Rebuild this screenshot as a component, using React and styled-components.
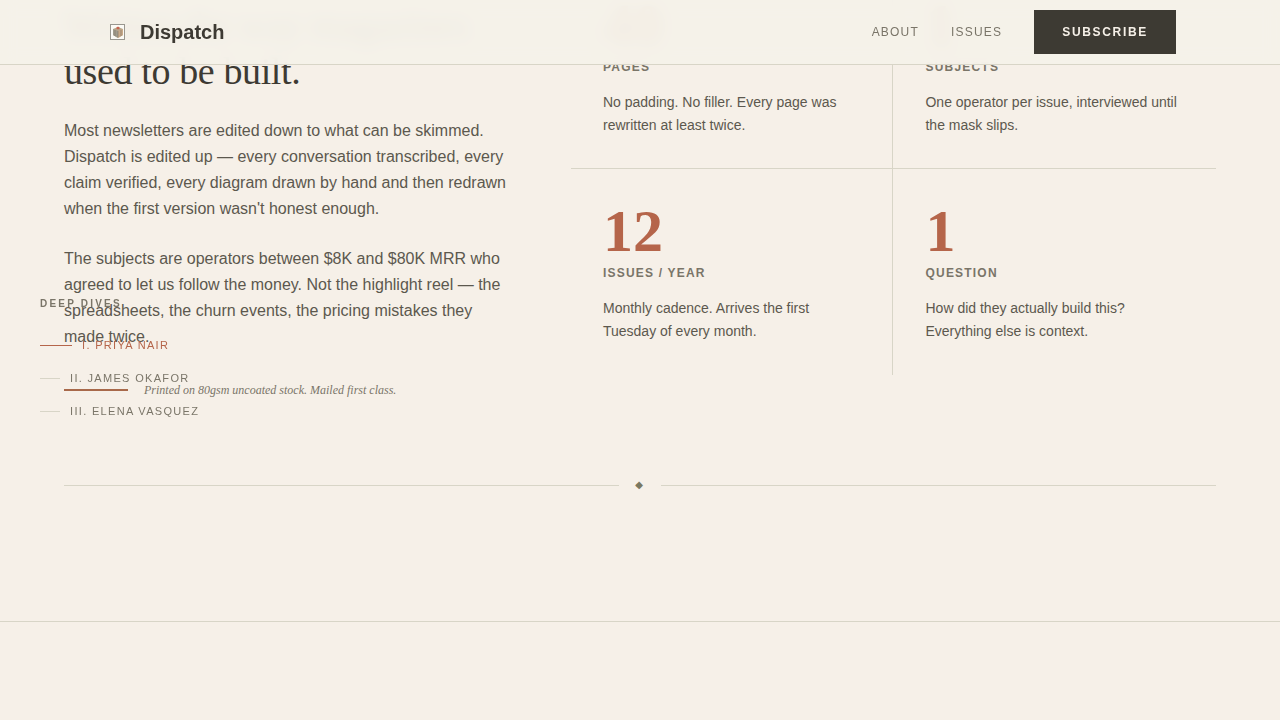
import React from "react";
import styled, { createGlobalStyle } from "styled-components";

const sans = `"Liberation Sans", Arial, sans-serif`;
const serif = `"Liberation Serif", "Times New Roman", serif`;

const paper = "#f6f0e8";
const ink = "#3d3a33";
const body = "#5c584e";
const muted = "#7a7568";
const rule = "#d8d5c7";
const rust = "#b5654a";

const GlobalStyle = createGlobalStyle`
  * {
    box-sizing: border-box;
  }

  body {
    margin: 0;
    background: ${paper};
    color: ${body};
    font-family: ${sans};
  }

  h2,
  h3,
  p,
  ul {
    margin: 0;
    padding: 0;
  }

  a {
    text-decoration: none;
  }
`;

const Header = styled.header`
  position: fixed;
  top: 0;
  left: 0;
  right: 0;
  z-index: 10;
  display: flex;
  align-items: center;
  justify-content: space-between;
  height: 65px;
  padding: 0 104px;
  background: rgba(245, 241, 233, 0.96);
  backdrop-filter: blur(8px);
  border-bottom: 1px solid ${rule};
`;

const Brand = styled.a`
  display: flex;
  align-items: center;
  gap: 8px;
  color: ${ink};
  font-size: 20px;
  font-weight: 700;
`;

const Mark = styled.svg`
  display: block;
  width: 28px;
  height: 28px;
`;

const Menu = styled.nav`
  display: flex;
  align-items: center;
  gap: 32px;
`;

const MenuLink = styled.a`
  color: ${muted};
  font-size: 12px;
  letter-spacing: 0.1em;
  text-transform: uppercase;
`;

const Subscribe = styled.button`
  height: 44px;
  padding: 0 28px;
  border: 0;
  background: ${ink};
  color: ${paper};
  font-family: ${sans};
  font-size: 12px;
  font-weight: 700;
  letter-spacing: 0.14em;
  text-transform: uppercase;
`;

const Rail = styled.nav`
  position: fixed;
  top: 50%;
  left: 40px;
  z-index: 5;
  padding-bottom: 3px;
  transform: translateY(-50%);
`;

const RailTitle = styled.h3`
  margin-bottom: 26px;
  color: ${muted};
  font-size: 10px;
  line-height: 14px;
  letter-spacing: 0.22em;
  text-transform: uppercase;
`;

const RailList = styled.ul`
  display: flex;
  flex-direction: column;
  gap: 16px;
  list-style: none;
`;

const RailLink = styled.a`
  display: flex;
  align-items: center;
  gap: 10px;
  color: ${props => (props.$active ? rust : muted)};
  font-size: 11px;
  line-height: 17px;
  letter-spacing: 0.12em;
  text-transform: uppercase;

  &::before {
    content: "";
    width: ${props => (props.$active ? 32 : 20)}px;
    height: 1px;
    background: ${props => (props.$active ? rust : rule)};
  }
`;

/* the page rests a little way down, its first rows under the header */
const Page = styled.main`
  margin-top: -37px;
`;

const Feature = styled.section`
  display: grid;
  grid-template-columns: 57fr 83fr;
  align-items: start;
  gap: 64px;
  padding: 0 64px;
`;

const Story = styled.div`
  padding-top: 39px;
`;

const Title = styled.h2`
  margin-bottom: 24px;
  color: ${ink};
  font-family: ${serif};
  font-size: 38px;
  font-weight: 400;
  line-height: 46px;
  letter-spacing: -0.01em;
`;

const Paragraph = styled.p`
  font-size: 16px;
  line-height: 26px;

  & + & {
    margin-top: 24px;
  }
`;

const Colophon = styled.p`
  display: flex;
  align-items: center;
  gap: 16px;
  margin-top: 32px;
  color: ${muted};
  font-family: ${serif};
  font-size: 12px;
  font-style: italic;
  line-height: 16px;

  &::before {
    content: "";
    width: 64px;
    height: 2px;
    background: #a8694a;
  }
`;

const Stats = styled.div`
  display: grid;
  grid-template-columns: 1fr 1fr;
`;

const Stat = styled.article`
  padding: 32px;

  &:nth-child(odd) {
    border-right: 1px solid ${rule};
  }
  &:nth-child(-n + 2) {
    padding-bottom: 31px;
    border-bottom: 1px solid ${rule};
  }
`;

const Figure = styled.p`
  color: ${rust};
  font-family: ${serif};
  font-size: 60px;
  font-weight: 700;
  line-height: 60px;
`;

const Label = styled.h3`
  margin: 4px 0 16px;
  color: ${muted};
  font-size: 12px;
  line-height: 16px;
  letter-spacing: 0.1em;
  text-transform: uppercase;
`;

const Note = styled.p`
  font-size: 14px;
  line-height: 23px;
`;

const Divider = styled.div`
  display: flex;
  align-items: center;
  gap: 16px;
  margin: 80px 64px 129px;
  color: #7a7860;
  font-family: "DejaVu Sans", sans-serif;
  font-size: 10px;
  line-height: 14px;
  letter-spacing: 0.2em;

  &::before,
  &::after {
    content: "";
    flex: 1;
    height: 1px;
    background: ${rule};
  }
`;

const NextSection = styled.section`
  min-height: 96px;
  border-top: 1px solid ${rule};
`;

const stats = [
  {
    figure: "40",
    label: "Pages",
    note: "No padding. No filler. Every page was rewritten at least twice."
  },
  {
    figure: "1",
    label: "Subjects",
    note: "One operator per issue, interviewed until the mask slips."
  },
  {
    figure: "12",
    label: "Issues / year",
    note: "Monthly cadence. Arrives the first Tuesday of every month."
  },
  {
    figure: "1",
    label: "Question",
    note: "How did they actually build this? Everything else is context."
  }
];

const dives = ["I. Priya Nair", "II. James Okafor", "III. Elena Vasquez"];

function Logo() {
  return (
    <Mark viewBox="0 0 28 28" aria-hidden="true">
      <rect x="6.5" y="6.5" width="14" height="15" fill="#fbfaf5" stroke="#99978f" />
      <path d="M9 11l5-2 5 2v6l-5 3-5-3z" fill="#b9a68a" />
      <path d="M9 11l5 2v7l-5-3z" fill="#a09c8c" />
      <path d="M14 13l5-2v6l-5 3z" fill="#c9aa88" />
      <path d="M11 12v6M14 13v6M17 12v6" stroke="#85796a" strokeWidth="0.7" />
      <path d="M12 10l2-1.5 2 1.5-2 1.5z" fill="#c7614d" />
    </Mark>
  );
}

function App() {
  return (
    <React.Fragment>
      <GlobalStyle />
      <Header>
        <Brand href="#top">
          <Logo />
          Dispatch
        </Brand>
        <Menu aria-label="Main">
          <MenuLink href="#about">About</MenuLink>
          <MenuLink href="#issues">Issues</MenuLink>
          <Subscribe type="button">Subscribe</Subscribe>
        </Menu>
      </Header>
      <Rail aria-label="Deep dives">
        <RailTitle>Deep Dives</RailTitle>
        <RailList>
          {dives.map((name, i) => (
            <li key={name}>
              <RailLink href={`#dive-${i + 1}`} $active={i === 0}>
                {name}
              </RailLink>
            </li>
          ))}
        </RailList>
      </Rail>
      <Page>
        <Feature id="about">
          <Story>
            <Title>
              Written the way magazines
              <br />
              used to be built.
            </Title>
            <Paragraph>
              Most newsletters are edited down to what can be skimmed. Dispatch
              is edited up — every conversation transcribed, every claim
              verified, every diagram drawn by hand and then redrawn when the
              first version wasn't honest enough.
            </Paragraph>
            <Paragraph>
              The subjects are operators between $8K and $80K MRR who agreed to
              let us follow the money. Not the highlight reel — the
              spreadsheets, the churn events, the pricing mistakes they made
              twice.
            </Paragraph>
            <Colophon>
              Printed on 80gsm uncoated stock. Mailed first class.
            </Colophon>
          </Story>
          <Stats>
            {stats.map(stat => (
              <Stat key={stat.label}>
                <Figure>{stat.figure}</Figure>
                <Label>{stat.label}</Label>
                <Note>{stat.note}</Note>
              </Stat>
            ))}
          </Stats>
        </Feature>
        <Divider>◆</Divider>
        <NextSection />
      </Page>
    </React.Fragment>
  );
}

export default App;
